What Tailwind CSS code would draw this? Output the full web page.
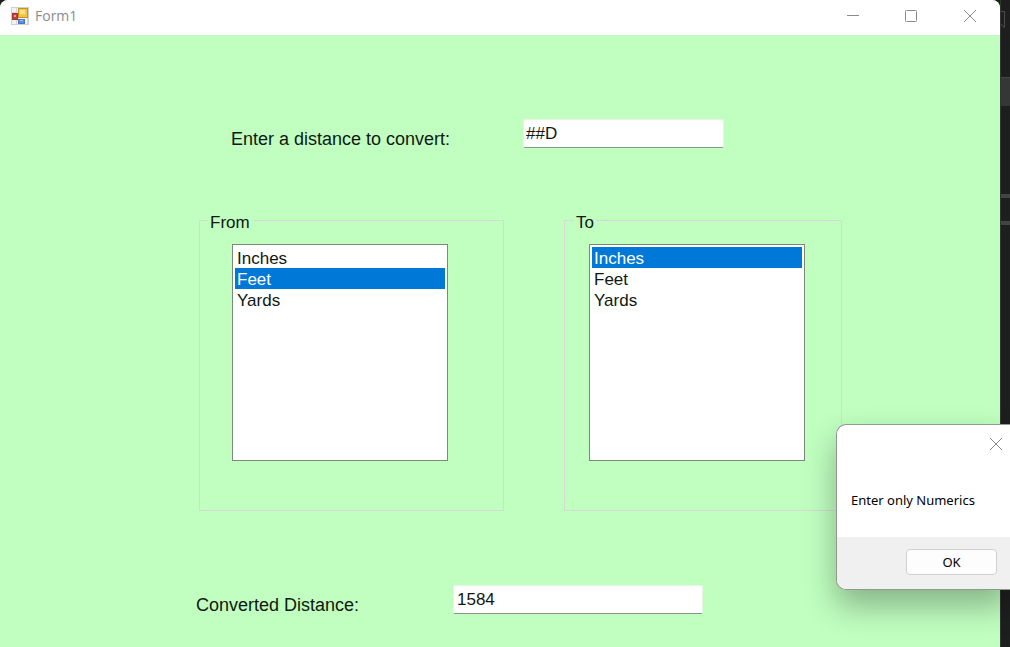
<!DOCTYPE html>
<html lang="en">
<head>
<meta charset="utf-8">
<title>Form1</title>
<script src="https://cdn.jsdelivr.net/npm/@tailwindcss/browser@4"></script>
</head>
<body class="relative flex min-h-screen overflow-hidden bg-[#1e1e1e] font-['Liberation_Sans',Arial,sans-serif] text-[17px] leading-5 text-[#101810]">
  <main class="flex min-w-0 flex-1 flex-col overflow-hidden rounded-t-lg bg-[#c0ffc0]">
    <header class="flex h-[35px] items-start bg-white text-[#8a8a8a]">
      <div class="flex h-8 flex-1 items-center gap-1.5 pl-[11px]">
        <svg class="size-[18px]" viewBox="0 0 18 18" aria-hidden="true">
          <rect x="0.5" y="0.5" width="17" height="17" fill="#f3f3f3" stroke="#cfcfcf"/>
          <path d="M5.500 1v5M1 5.500h5M5.500 13v4M16.500 11v6" stroke="#d6d6d6" fill="none"/>
          <rect x="1.500" y="6.500" width="5" height="6" fill="#c4403c" stroke="#a3322f"/>
          <rect x="3" y="8" width="2" height="2" fill="#ea9a90"/>
          <rect x="7.500" y="1.500" width="9" height="9" fill="#f5c63c" stroke="#c49324"/>
          <rect x="9" y="3" width="5" height="4" fill="#fde38b"/>
          <rect x="7.500" y="12.500" width="6" height="4" fill="#5b8de0" stroke="#4a74c4"/>
          <rect x="9" y="13" width="3" height="1" fill="#a5c4f5"/>
        </svg>
        <h1 class="font-['Open_Sans','Noto_Sans',sans-serif] text-sm text-[#8c8c8c]">Form1</h1>
      </div>
      <button type="button" aria-label="Minimize" class="grid h-8 w-[58px] place-items-center">
        <svg class="size-3" viewBox="0 0 12 12" fill="none" stroke="currentColor"><path d="M0 5.5h12"/></svg>
      </button>
      <button type="button" aria-label="Maximize" class="grid h-8 w-[58px] place-items-center">
        <svg class="size-3" viewBox="0 0 12 12" fill="none" stroke="currentColor"><rect x="0.5" y="0.5" width="11" height="11" rx="1"/></svg>
      </button>
      <button type="button" aria-label="Close" class="grid h-8 w-[60px] place-items-center">
        <svg class="size-3" viewBox="0 0 12 12" fill="none" stroke="currentColor"><path d="M0 0l12 12M12 0L0 12"/></svg>
      </button>
    </header>

    <form class="flex flex-1 flex-col pt-[84px]">
      <div class="flex items-start pl-[231px]">
        <label for="distance" class="w-[292px] pt-2.5 text-lg leading-5">Enter a distance to convert:</label>
        <input id="distance" type="text" value="##D" class="h-[29px] w-[201px] rounded-xs border border-[#e8f4e8] border-b-[#8a958a] bg-white px-0.5 outline-none">
      </div>

      <div class="flex gap-[60px] pt-[61px] pl-[199px]">
        <fieldset class="w-[305px] border border-[#d6dad6] pt-3.5 pb-[49px] pl-8">
          <legend class="-ml-6 px-0.5 pt-1.5 leading-3.5"><label for="from">From</label></legend>
          <select id="from" size="10" class="block h-[217px] w-[216px] overflow-hidden border border-[#7a8a7a] bg-white p-0.5 outline-none">
            <option class="h-[21px] px-0.5 pt-0.5 pb-0 leading-[19px] checked:bg-[linear-gradient(#0078d7,#0078d7)] checked:text-white!">Inches</option>
            <option selected class="h-[21px] px-0.5 pt-0.5 pb-0 leading-[19px] checked:bg-[linear-gradient(#0078d7,#0078d7)] checked:text-white!">Feet</option>
            <option class="h-[21px] px-0.5 pt-0.5 pb-0 leading-[19px] checked:bg-[linear-gradient(#0078d7,#0078d7)] checked:text-white!">Yards</option>
          </select>
        </fieldset>
        <fieldset class="w-[278px] border border-[#d6dad6] pt-3.5 pb-[49px] pl-6">
          <legend class="-ml-[15px] px-0.5 pt-1.5 leading-3.5"><label for="to">To</label></legend>
          <select id="to" size="10" class="block h-[217px] w-[216px] overflow-hidden border border-[#7a8a7a] bg-white p-0.5 outline-none">
            <option selected class="h-[21px] px-0.5 pt-0.5 pb-0 leading-[19px] checked:bg-[linear-gradient(#0078d7,#0078d7)] checked:text-white!">Inches</option>
            <option class="h-[21px] px-0.5 pt-0.5 pb-0 leading-[19px] checked:bg-[linear-gradient(#0078d7,#0078d7)] checked:text-white!">Feet</option>
            <option class="h-[21px] px-0.5 pt-0.5 pb-0 leading-[19px] checked:bg-[linear-gradient(#0078d7,#0078d7)] checked:text-white!">Yards</option>
          </select>
        </fieldset>
      </div>

      <div class="flex items-start pt-[74px] pl-[196px]">
        <label for="result" class="w-[257px] pt-2.5 text-lg leading-5">Converted Distance:</label>
        <input id="result" type="text" value="1584" class="h-[29px] w-[250px] rounded-xs border border-[#e8f4e8] border-b-[#8a958a] bg-white px-[3px] outline-none">
      </div>
    </form>
  </main>

  <!-- Sliver of the editor behind the form -->
  <aside class="w-2.5 shrink-0 border-l border-[#303830] bg-[#1e1e1e]" aria-hidden="true">
    <svg class="mt-[11px] h-[18px] w-1.5" viewBox="0 0 6 18" fill="none" stroke="#4c4c4c"><path d="M0 .5h3.500v16L0 13.500"/></svg>
    <div class="mt-12 h-[29px] border-t border-[#454545] bg-[#363636]"></div>
    <div class="mt-[88px] h-1 bg-[#444444]"></div>
    <div class="mt-[23px] h-1 bg-[#444444]"></div>
  </aside>

  <section role="dialog" aria-label="Message" class="absolute top-[424px] right-0 w-[174px] rounded-l-[10px] border border-r-0 border-[#8f9a8f] bg-white font-['Noto_Sans','Open_Sans',sans-serif] text-[13px] text-black shadow-[0_16px_32px_rgba(0,0,0,0.30)]">
    <div class="flex h-[38px] items-center justify-end pr-2">
      <button type="button" aria-label="Close message" class="text-[#8a8a8a]">
        <svg class="size-3" viewBox="0 0 12 12" fill="none" stroke="currentColor"><path d="M0 0l12 12M12 0L0 12"/></svg>
      </button>
    </div>
    <p class="h-[74px] pt-[27px] pl-3.5 whitespace-nowrap">Enter only Numerics</p>
    <div class="flex h-[52px] items-start justify-end rounded-bl-[9px] bg-[#f0f0f0] pt-3 pr-[13px]">
      <button type="button" class="h-[26px] w-[91px] rounded-sm border border-[#d0d0d0] bg-[#fdfdfd]">OK</button>
    </div>
  </section>
</body>
</html>
